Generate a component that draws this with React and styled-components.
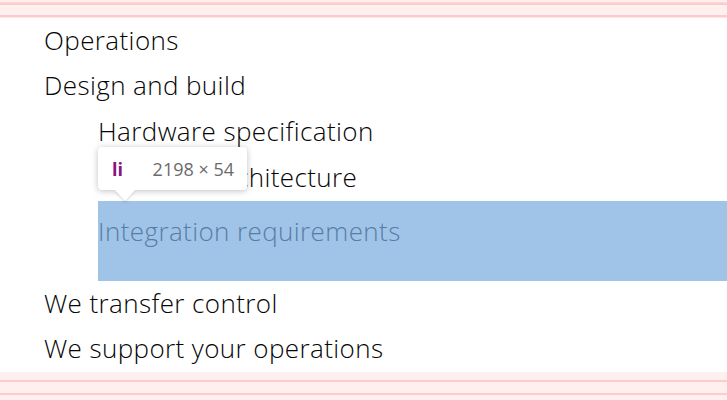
import styled, { createGlobalStyle } from "styled-components";

const Global = createGlobalStyle`
  html, body {
    margin: 0;
    padding: 0;
    background: #fff;
    overflow: hidden;
  }
  body {
    font-family: "Open Sans", "DejaVu Sans", sans-serif;
  }
`;

const topStripes = `linear-gradient(to bottom,
  #ffeeee 0px, #ffeeee 2px,
  #ffd9d9 2px, #ffd9d9 3px,
  #ffcaca 3px, #ffcaca 5px,
  #fff0f0 5px, #fff0f0 15.5px,
  #ffcaca 15.5px, #ffcaca 17px,
  #ffe6e6 17px, #ffe6e6 18px)`;

const bottomStripes = `linear-gradient(to bottom,
  #fff0f0 0px, #fff0f0 8px,
  #ffcccc 8px, #ffcccc 10px,
  #fff0f0 10px, #fff0f0 21px,
  #ffcccc 21px, #ffcccc 23px,
  #fff0f0 23px, #fff0f0 28px)`;

const App = () => {
  return (
    <Page>
      <Global />
      <Band $height={18} $bg={topStripes} />
      <Menu>
        <Item>Operations</Item>
        <Item>
          Design and build
          <SubMenu>
            <SubItem>Hardware specification</SubItem>
            <SubItem>
              Software architecture
              <Tooltip>
                <Tag>li</Tag>
                <Size>2198 × 54</Size>
              </Tooltip>
            </SubItem>
            <SubItem $active>Integration requirements</SubItem>
          </SubMenu>
        </Item>
        <Item>We transfer control</Item>
        <Item>We support your operations</Item>
      </Menu>
      <Band $height={28} $bg={bottomStripes} $gap={1} />
    </Page>
  );
};

export default App;

const Page = styled.div`
  width: 727px;
  height: 400px;
  overflow: hidden;
`;

const Band = styled.div`
  height: ${(p) => p.$height}px;
  margin-top: ${(p) => p.$gap || 0}px;
  background: ${(p) => p.$bg};
`;

const Menu = styled.ul`
  list-style: none;
  margin: 0;
  padding: 0 0 0 44px;
  font-size: 26px;
  font-weight: 300;
  letter-spacing: 0.4px;
  color: #050505;
`;

const Item = styled.li`
  line-height: 45px;
`;

const SubMenu = styled.ul`
  list-style: none;
  margin: 0;
  padding: 0 0 0 54px;
`;

const SubItem = styled.li`
  position: relative;
  line-height: 46px;
  ${(p) =>
    p.$active &&
    `
    margin-top: 1px;
    margin-right: -1000px;
    padding-top: 7px;
    height: 80px;
    box-sizing: border-box;
    background: #a0c4e8;
    color: #587da4;
  `}
`;

const Tooltip = styled.div`
  position: absolute;
  left: 0;
  top: -7px;
  height: 43px;
  width: 149px;
  box-sizing: border-box;
  padding: 0 13px 0 14px;
  display: flex;
  align-items: center;
  justify-content: space-between;
  background: #fff;
  border-radius: 4px;
  box-shadow: 0 1px 6px rgba(0, 0, 0, 0.25);
  font-family: "Open Sans", sans-serif;
  letter-spacing: 0;
  line-height: 1;
  z-index: 2;

  &::after {
    content: "";
    position: absolute;
    left: 17px;
    bottom: -11px;
    border-left: 10px solid transparent;
    border-right: 10px solid transparent;
    border-top: 11px solid #fff;
    filter: drop-shadow(0 2px 1px rgba(0, 0, 0, 0.12));
  }
`;

const Tag = styled.span`
  font-size: 18px;
  font-weight: 700;
  color: #881280;
`;

const Size = styled.span`
  font-size: 18px;
  font-weight: 400;
  color: #6b6b6b;
`;
